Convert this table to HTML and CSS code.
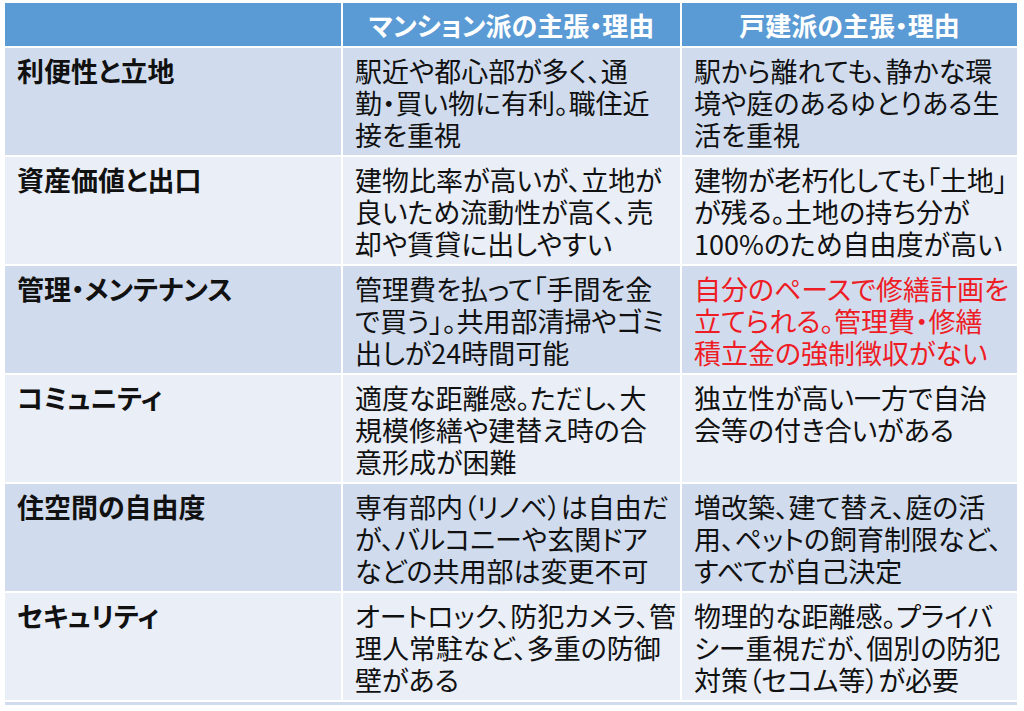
FILE: index.html
```html
<!DOCTYPE html>
<html lang="ja">
<head>
<meta charset="utf-8">
<title>マンション派と戸建派の比較</title>
<link rel="stylesheet" href="styles.css">
</head>
<body>
<div class="table">
  <div class="head"></div>
  <div class="head">マンション派の主張・理由</div>
  <div class="head">戸建派の主張・理由</div>

  <div class="cell label dark">利便性と立地</div>
  <div class="cell dark">駅近や都心部が多く、通<br>勤・買い物に有利。職住近<br>接を重視</div>
  <div class="cell dark">駅から離れても、静かな環<br>境や庭のあるゆとりある生<br>活を重視</div>

  <div class="cell label light">資産価値と出口</div>
  <div class="cell light">建物比率が高いが、立地が<br>良いため流動性が高く、売<br>却や賃貸に出しやすい</div>
  <div class="cell light">建物が老朽化しても「土地」<br>が残る。土地の持ち分が<br>100%のため自由度が高い</div>

  <div class="cell label dark">管理・メンテナンス</div>
  <div class="cell dark">管理費を払って「手間を金<br>で買う」。共用部清掃やゴミ<br>出しが24時間可能</div>
  <div class="cell dark red">自分のペースで修繕計画を<br>立てられる。管理費・修繕<br>積立金の強制徴収がない</div>

  <div class="cell label light">コミュニティ</div>
  <div class="cell light">適度な距離感。ただし、大<br>規模修繕や建替え時の合<br>意形成が困難</div>
  <div class="cell light">独立性が高い一方で自治<br>会等の付き合いがある</div>

  <div class="cell label dark">住空間の自由度</div>
  <div class="cell dark">専有部内（リノベ）は自由だ<br>が、バルコニーや玄関ドア<br>などの共用部は変更不可</div>
  <div class="cell dark">増改築、建て替え、庭の活<br>用、ペットの飼育制限など、<br>すべてが自己決定</div>

  <div class="cell label light">セキュリティ</div>
  <div class="cell light">オートロック、防犯カメラ、管<br>理人常駐など、多重の防御<br>壁がある</div>
  <div class="cell light">物理的な距離感。プライバ<br>シー重視だが、個別の防犯<br>対策（セコム等）が必要</div>

  <div class="strip"></div>
</div>
</body>
</html>
```

FILE: styles.css
```css
html, body {
  margin: 0;
  padding: 0;
  background: #ffffff;
}

body {
  font-family: "Noto Sans CJK JP", "Noto Sans", sans-serif;
  font-feature-settings: "palt";
  color: #111111;
}

.table {
  display: grid;
  grid-template-columns: 336px 337px 335px;
  grid-template-rows: 43px repeat(6, 107px) 3px;
  column-gap: 2px;
  row-gap: 2px;
  margin: 3px 0 0 5px;
  width: 1012px;
}

.head {
  background: #5b9bd5;
  color: #ffffff;
  font-weight: 700;
  font-size: 26px;
  display: flex;
  align-items: center;
  justify-content: center;
  white-space: nowrap;
}

.cell {
  font-size: 27px;
  line-height: 32px;
  padding: 7px 0 0 12px;
  white-space: nowrap;
  overflow: hidden;
}

.label {
  font-weight: 700;
}

.dark {
  background: #d0dcee;
}

.light {
  background: #e9eef7;
}

.red {
  color: #ee1c25;
}

.strip {
  grid-column: 1 / 4;
  background: #d0dcee;
}
```
